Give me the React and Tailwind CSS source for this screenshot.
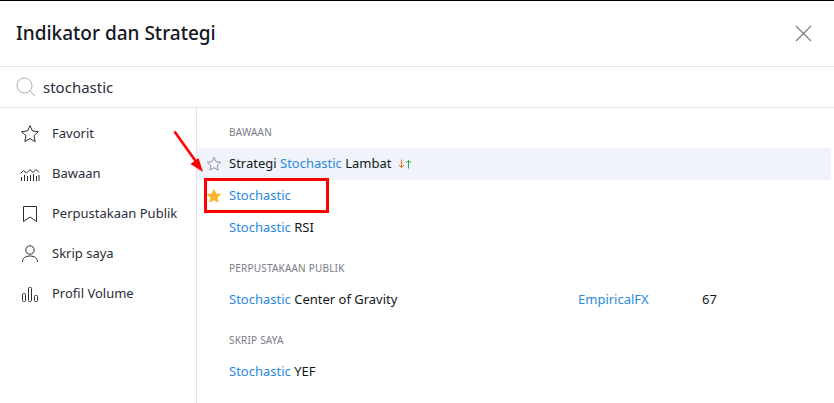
const font = { fontFamily: '"Noto Sans", sans-serif' };

const Blue = ({ children }) => <span className="text-[#2a8ae0]">{children}</span>;

const StarOutline = ({ className }) => (
  <svg viewBox="0 0 20 20" className={className} fill="none" stroke="currentColor" strokeWidth="1">
    <path d="M10 1.6l2.5 5.4 5.9.7-4.4 4 1.2 5.9-5.2-3-5.2 3 1.2-5.9-4.4-4 5.9-.7z" />
  </svg>
);

const icons = {
  star: <StarOutline className="w-[20px] h-[20px]" />,
  chart: (
    <svg viewBox="0 0 20 20" className="w-[20px] h-[20px]" fill="none" stroke="currentColor" strokeWidth="1">
      <path d="M0.5 9.5l3-3 3 2.5 3.5-3.5 3 3 3-3 3 3" />
      <path d="M1.5 17v-4M4.5 17v-6M7.5 17v-5M10.5 17v-6M13.5 17v-7M16.5 17v-5M19 17v-6" />
    </svg>
  ),
  bookmark: (
    <svg viewBox="0 0 20 20" className="w-[20px] h-[20px]" fill="none" stroke="currentColor" strokeWidth="1">
      <path d="M3.5 2.5h13v15l-6.5-4.5-6.5 4.5z" />
    </svg>
  ),
  user: (
    <svg viewBox="0 0 20 20" className="w-[20px] h-[20px]" fill="none" stroke="currentColor" strokeWidth="1">
      <circle cx="10" cy="6" r="4.2" />
      <path d="M2.5 18c0-4 3-6 7.5-6s7.5 2 7.5 6" />
    </svg>
  ),
  volume: (
    <svg viewBox="0 0 20 20" className="w-[20px] h-[20px]" fill="none" stroke="currentColor" strokeWidth="1">
      <rect x="2.5" y="9.5" width="3" height="8" rx="1" />
      <rect x="8.5" y="3.5" width="3" height="14" rx="1" />
      <rect x="14.5" y="11.5" width="3" height="6" rx="1" />
    </svg>
  ),
};

const side = [
  ["star", "Favorit"],
  ["chart", "Bawaan"],
  ["bookmark", "Perpustakaan Publik"],
  ["user", "Skrip saya"],
  ["volume", "Profil Volume"],
];

const Heading = ({ children }) => (
  <div className="h-8 pl-[32px] flex items-center text-[10px] tracking-[0.2px] text-[#787b86] uppercase">{children}</div>
);

const Row = ({ children, className = "", star }) => (
  <div className={`h-8 pl-[32px] pr-0 flex items-center relative text-[#131722] ${className}`}>
    {star}
    {children}
  </div>
);

export default function App() {
  return (
    <div className="w-[834px] h-[403px] bg-white overflow-hidden relative flex flex-col text-[13px] text-[#131722]" style={font}>
      <div className="h-[1px] bg-black shrink-0" />
      <div className="h-[65px] shrink-0 flex items-center justify-between pl-4 pr-[22px] border-b-0">
        <h1 className="text-[19px] font-medium text-[#131722]">Indikator dan Strategi</h1>
        <svg viewBox="0 0 17 17" className="w-[17px] h-[17px] text-[#787b86]" fill="none" stroke="currentColor" strokeWidth="1.1">
          <path d="M1 1l15 15M16 1L1 16" />
        </svg>
      </div>
      <div className="h-[42px] shrink-0 flex items-center pl-4 gap-[7px] border-y border-[#e0e3eb]">
        <svg viewBox="0 0 20 20" className="w-[20px] h-[20px] text-[#a9acb6]" fill="none" stroke="currentColor" strokeWidth="1">
          <circle cx="8.5" cy="8.5" r="7.5" />
          <path d="M14 14l5 5" />
        </svg>
        <span className="text-[15px] text-[#2a2e39]">stochastic</span>
      </div>
      <div className="flex flex-1 min-h-0">
        <div className="w-[197px] shrink-0 border-r border-[#e0e3eb] pt-[6px]">
          {side.map(([ic, label]) => (
            <div key={label} className="h-10 flex items-center pl-[20px] gap-[12px] text-[#2a2e39]">
              {icons[ic]}
              <span>{label}</span>
            </div>
          ))}
        </div>
        <div className="flex-1 pt-2 pr-[3px]">
          <Heading>Bawaan</Heading>
          <Row
            className="bg-[#f0f3fa]"
            star={<StarOutline className="absolute left-[9px] top-[8px] w-[16px] h-[16px] text-[#787b86]" />}
          >
            <span>Strategi <Blue>Stochastic</Blue> Lambat</span>
            <span className="ml-[7px] inline-flex">
              <svg viewBox="0 0 14 10" className="w-[14px] h-[10px]" fill="none" strokeWidth="1">
                <path d="M3.5 0.5v8M1 6l2.5 2.5L6 6" stroke="#f7681a" />
                <path d="M10.5 9.5v-8M8 4l2.5-2.5L13 4" stroke="#26a65b" />
              </svg>
            </span>
          </Row>
          <Row
            star={
              <svg viewBox="0 0 20 20" className="absolute left-[9px] top-[8px] w-[16px] h-[16px]" fill="#fbb52d">
                <path d="M10 .8l2.8 6 6.5.8-4.8 4.4 1.3 6.4L10 15.2l-5.8 3.2 1.3-6.4L.7 7.6l6.5-.8z" />
              </svg>
            }
          >
            <Blue>Stochastic</Blue>
          </Row>
          <Row>
            <span><Blue>Stochastic</Blue> RSI</span>
          </Row>
          <div className="mt-2">
            <Heading>Perpustakaan Publik</Heading>
            <Row>
              <span className="w-[349px] shrink-0"><Blue>Stochastic</Blue> Center of Gravity</span>
              <span className="w-[124px] shrink-0"><Blue>EmpiricalFX</Blue></span>
              <span>67</span>
            </Row>
          </div>
          <div className="mt-2">
            <Heading>Skrip saya</Heading>
            <Row>
              <span><Blue>Stochastic</Blue> YEF</span>
            </Row>
          </div>
        </div>
      </div>
      <div className="absolute left-[204px] top-[178px] w-[125px] h-[35px] border-[3px] border-[#ff0000]" />
      <svg viewBox="0 0 34 46" className="absolute left-[172px] top-[129px] w-[34px] h-[46px]">
        <path d="M2.5 2.5L25 34" stroke="#f00" strokeWidth="2.6" fill="none" />
        <path d="M31 43l-12.500-8 8-6z" fill="#f00" />
      </svg>
    </div>
  );
}
